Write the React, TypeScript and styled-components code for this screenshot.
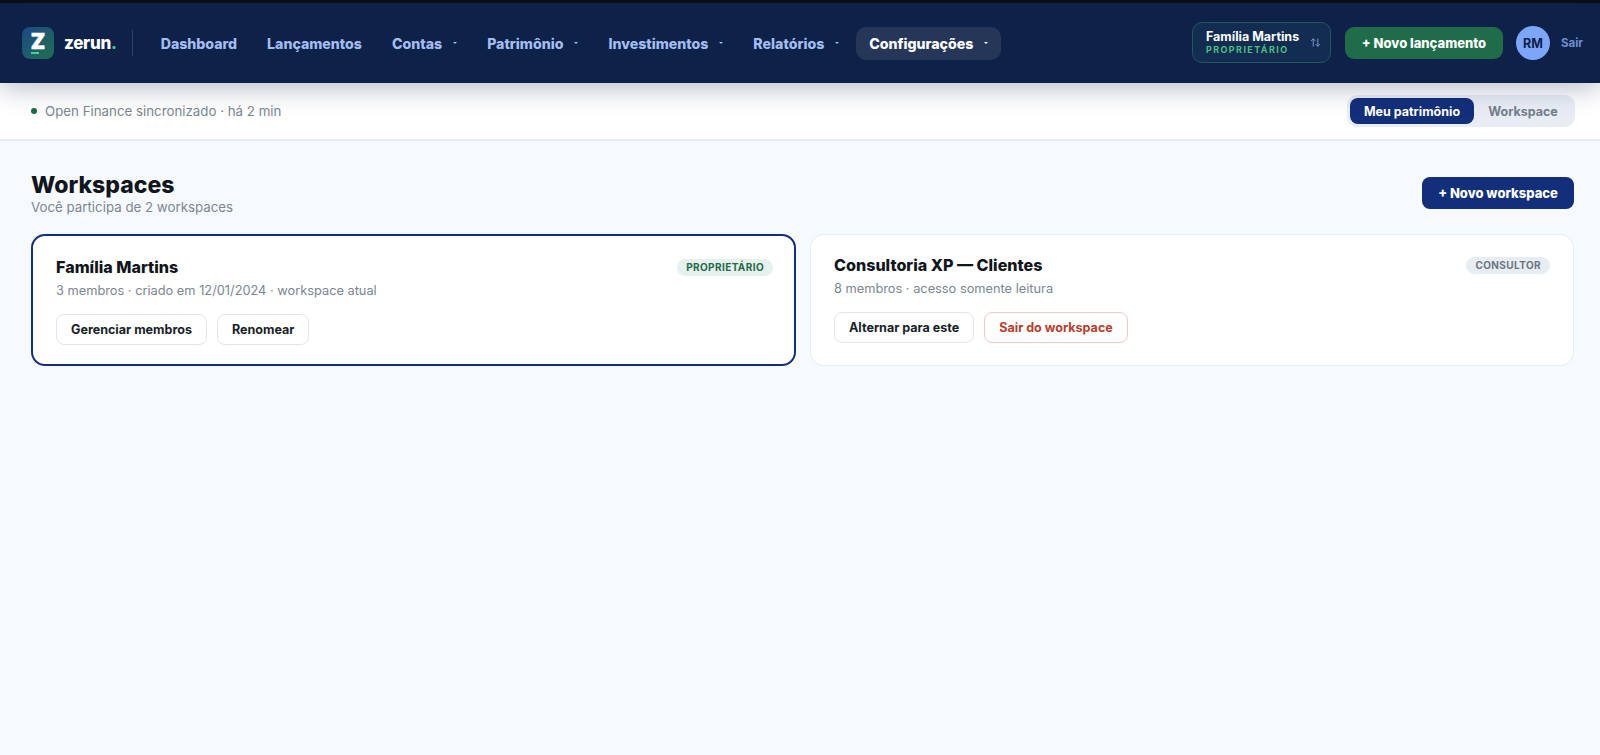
import React from 'react';
import styled, { createGlobalStyle } from 'styled-components';
import { ArrowUpDown } from 'lucide-react';

const GlobalStyle = createGlobalStyle`
  html, body {
    margin: 0;
    padding: 0;
    height: 100%;
    background: #f6f9fe;
    font-family: Inter, "Noto Sans", sans-serif;
  }
  * {
    box-sizing: border-box;
  }
`;

const Page = styled.div`
  min-height: 755px;
  border-top: 3px solid #0b0d12;
  background: #f6f9fe;
`;

const TopBar = styled.header`
  position: relative;
  z-index: 2;
  height: 80px;
  display: flex;
  align-items: center;
  padding: 0 17px 0 22px;
  background: #0d2149;
  box-shadow: 0 6px 24px rgba(13, 33, 73, 0.28);
`;

const Brand = styled.div`
  display: flex;
  align-items: center;
  gap: 10px;
  height: 26px;
  padding-right: 15px;
  margin-right: 15px;
  border-right: 1px solid rgba(255, 255, 255, 0.14);
`;

const LogoMark = styled.div`
  width: 32px;
  height: 32px;
  border-radius: 8px;
  display: flex;
  flex-direction: column;
  align-items: center;
  justify-content: center;
  background: linear-gradient(135deg, #1f4788, #1f7050);
  color: #fff;
  font-size: 21px;
  font-weight: 900;
  line-height: 17px;
  -webkit-text-stroke: 0.5px #fff;
`;

const LogoBar = styled.span`
  width: 8px;
  height: 2px;
  margin: 2px 6px 0 0;
  background: #4fd08c;
`;

const Wordmark = styled.span`
  color: #fff;
  font-size: 17px;
  font-weight: 800;
  letter-spacing: -0.3px;
`;

const WordDot = styled.span`
  color: #3ecf8e;
`;

const Nav = styled.nav`
  display: flex;
  align-items: center;
  gap: 4px;
  flex: 1;
`;

const NavItem = styled.a<{ $active?: boolean }>`
  display: flex;
  align-items: center;
  gap: 11px;
  height: 33px;
  padding: 0 13px;
  border-radius: 10px;
  font-size: 14.15px;
  font-weight: 800;
  color: ${p => (p.$active ? '#fff' : '#a3bdf0')};
  background: ${p => (p.$active ? '#263659' : 'transparent')};
`;

const Caret = styled.i`
  width: 0;
  height: 0;
  border-left: 2.5px solid transparent;
  border-right: 2.5px solid transparent;
  border-top: 2.5px solid currentColor;
`;

const Switcher = styled.div`
  width: 139px;
  height: 41px;
  display: flex;
  align-items: center;
  justify-content: space-between;
  padding: 0 9px 0 13px;
  margin: 0 14px 2px 0;
  border: 1px solid #24565f;
  border-radius: 10px;
  background: #122c52;
`;

const SwitcherName = styled.div`
  color: #fff;
  font-size: 12.5px;
  font-weight: 700;
  line-height: 15px;
  white-space: nowrap;
`;

const SwitcherRole = styled.div`
  color: #4cc083;
  font-size: 9px;
  font-weight: 700;
  letter-spacing: 1.4px;
  line-height: 12px;
`;

const NewEntry = styled.button`
  width: 158px;
  height: 32px;
  margin-right: 13px;
  border: 0;
  border-radius: 9px;
  background: #1f6b4a;
  color: #fff;
  font: 800 13px Inter, sans-serif;
`;

const Avatar = styled.div`
  width: 34px;
  height: 34px;
  margin-right: 11px;
  border-radius: 50%;
  display: flex;
  align-items: center;
  justify-content: center;
  background: #7ea6f8;
  color: #0d2149;
  font-size: 12.5px;
  font-weight: 700;
`;

const Logout = styled.span`
  color: #6f8fcf;
  font-size: 11.5px;
  font-weight: 700;
`;

const StatusBar = styled.div`
  height: 58px;
  display: flex;
  align-items: center;
  justify-content: space-between;
  padding: 0 25px 0 31px;
  background: #fff;
  border-bottom: 2px solid #e6ebf4;
`;

const Status = styled.div`
  display: flex;
  align-items: center;
  gap: 8px;
  color: #7c8692;
  font-size: 13.3px;
`;

const StatusDot = styled.i`
  width: 6px;
  height: 6px;
  border-radius: 50%;
  background: #1a6b48;
`;

const Toggle = styled.div`
  width: 228px;
  height: 32px;
  display: flex;
  align-items: center;
  padding: 3px;
  border-radius: 10px;
  background: #e8edf5;
`;

const ToggleOption = styled.div<{ $on?: boolean }>`
  height: 26px;
  display: flex;
  align-items: center;
  justify-content: center;
  flex: ${p => (p.$on ? '0 0 124px' : '1')};
  border-radius: 8px;
  font-size: 12.5px;
  font-weight: 700;
  color: ${p => (p.$on ? '#fff' : '#737d8c')};
  background: ${p => (p.$on ? '#142f7a' : 'transparent')};
`;

const Main = styled.main`
  padding: 30px 26px 0 31px;
`;

const Heading = styled.div`
  display: flex;
  align-items: flex-start;
  justify-content: space-between;
  margin-bottom: 19px;
`;

const Title = styled.h1`
  margin: 0;
  color: #11151c;
  font-size: 23px;
  font-weight: 800;
  line-height: 28px;
`;

const Subtitle = styled.p`
  margin: 0;
  color: #7c8692;
  font-size: 13.3px;
  line-height: 16px;
`;

const NewWorkspace = styled.button`
  width: 152px;
  height: 32px;
  margin-top: 6px;
  border: 0;
  border-radius: 8px;
  background: #142f7a;
  color: #fff;
  font: 800 13px Inter, sans-serif;
`;

const Cards = styled.div`
  display: grid;
  grid-template-columns: 765px 764px;
  gap: 14px;
`;

const Card = styled.section<{ $current?: boolean }>`
  height: 132px;
  padding: ${p => (p.$current ? '21px 21px 0 23px' : '20px 23px 0')};
  background: #fff;
  border: ${p => (p.$current ? '2px solid #142f7a' : '1px solid #e6ebf4')};
  border-radius: 14px;
`;

const CardHead = styled.div`
  display: flex;
  align-items: center;
  justify-content: space-between;
  height: 20px;
`;

const CardTitle = styled.h2`
  margin: 0;
  color: #11151c;
  font-size: 16.1px;
  font-weight: 800;
`;

const Badge = styled.span<{ $owner?: boolean }>`
  height: 17px;
  display: flex;
  align-items: center;
  padding: 0 9px;
  border-radius: 9px;
  font-size: 10px;
  font-weight: 700;
  letter-spacing: 0.4px;
  color: ${p => (p.$owner ? '#1f6b4a' : '#6b7583')};
  background: ${p => (p.$owner ? '#e6f0ec' : '#e8edf3')};
`;

const CardMeta = styled.p`
  margin: 5px 0 14px;
  color: #7c8692;
  font-size: 12.8px;
  line-height: 18px;
`;

const Actions = styled.div`
  display: flex;
  gap: 10px;
`;

const Action = styled.button<{ $danger?: boolean }>`
  height: 31px;
  padding: 0 14px;
  background: #fff;
  border: 1px solid ${p => (p.$danger ? '#f2c9c2' : '#e0e6ef')};
  border-radius: 8px;
  color: ${p => (p.$danger ? '#b5402c' : '#1a1f29')};
  font: 700 12.55px Inter, sans-serif;
`;

const navItems = [
  { label: 'Dashboard' },
  { label: 'Lançamentos' },
  { label: 'Contas', menu: true },
  { label: 'Patrimônio', menu: true },
  { label: 'Investimentos', menu: true },
  { label: 'Relatórios', menu: true },
  { label: 'Configurações', menu: true, active: true },
];

const App = () => (
  <Page>
    <GlobalStyle />
    <TopBar>
      <Brand>
        <LogoMark>
          Z
          <LogoBar />
        </LogoMark>
        <Wordmark>
          zerun<WordDot>.</WordDot>
        </Wordmark>
      </Brand>
      <Nav>
        {navItems.map(item => (
          <NavItem key={item.label} $active={item.active}>
            {item.label}
            {item.menu && <Caret />}
          </NavItem>
        ))}
      </Nav>
      <Switcher>
        <div>
          <SwitcherName>Família Martins</SwitcherName>
          <SwitcherRole>PROPRIETÁRIO</SwitcherRole>
        </div>
        <ArrowUpDown size={11} color="#7ea0d8" />
      </Switcher>
      <NewEntry>+ Novo lançamento</NewEntry>
      <Avatar>RM</Avatar>
      <Logout>Sair</Logout>
    </TopBar>
    <StatusBar>
      <Status>
        <StatusDot />
        Open Finance sincronizado · há 2 min
      </Status>
      <Toggle>
        <ToggleOption $on>Meu patrimônio</ToggleOption>
        <ToggleOption>Workspace</ToggleOption>
      </Toggle>
    </StatusBar>
    <Main>
      <Heading>
        <div>
          <Title>Workspaces</Title>
          <Subtitle>Você participa de 2 workspaces</Subtitle>
        </div>
        <NewWorkspace>+ Novo workspace</NewWorkspace>
      </Heading>
      <Cards>
        <Card $current>
          <CardHead>
            <CardTitle>Família Martins</CardTitle>
            <Badge $owner>PROPRIETÁRIO</Badge>
          </CardHead>
          <CardMeta>3 membros · criado em 12/01/2024 · workspace atual</CardMeta>
          <Actions>
            <Action>Gerenciar membros</Action>
            <Action>Renomear</Action>
          </Actions>
        </Card>
        <Card>
          <CardHead>
            <CardTitle>Consultoria XP — Clientes</CardTitle>
            <Badge>CONSULTOR</Badge>
          </CardHead>
          <CardMeta>8 membros · acesso somente leitura</CardMeta>
          <Actions>
            <Action>Alternar para este</Action>
            <Action $danger>Sair do workspace</Action>
          </Actions>
        </Card>
      </Cards>
    </Main>
  </Page>
);

export default App;
